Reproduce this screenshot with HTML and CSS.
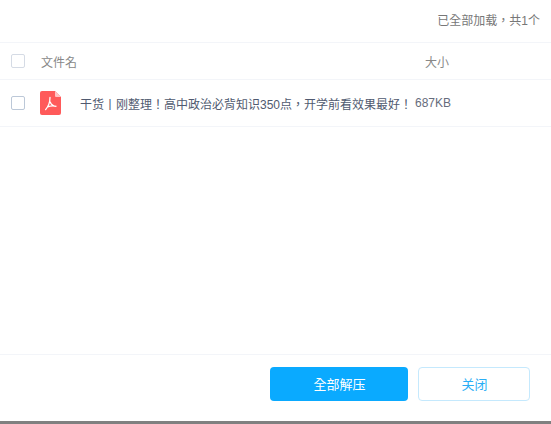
FILE: index.html
```html
<!DOCTYPE html>
<html lang="zh-Hant">
<head>
<meta charset="utf-8">
<title>解压</title>
<link rel="stylesheet" href="styles.css">
</head>
<body>
<div class="dialog">
  <div class="status">已全部加载，共1个</div>
  <div class="row head">
    <span class="check light"></span>
    <span class="name-head">文件名</span>
    <span class="size-head">大小</span>
  </div>
  <div class="row item">
    <span class="check"></span>
    <svg class="pdf" viewBox="0 0 21 24" width="21" height="24" aria-hidden="true">
      <path d="M2 0H15L21 6V22a2 2 0 0 1-2 2H2a2 2 0 0 1-2-2V2a2 2 0 0 1 2-2z" fill="#ff5a5a"/>
      <path d="M15 0L21 6H16a1 1 0 0 1-1-1z" fill="#ffc4c4"/>
      <path d="M10 6.5C10 10 8.8 15 5.6 18.6M10.2 11C11 13.2 13 15.2 16.4 15.4C13.6 14.6 10.5 14.8 7.6 15.8" fill="none" stroke="#fff" stroke-width="1.3" stroke-linecap="round"/>
    </svg>
    <span class="file-name">干货丨刚整理！高中政治必背知识350点，开学前看效果最好！</span>
    <span class="file-size">687KB</span>
  </div>
  <div class="spacer"></div>
  <div class="footer">
    <button class="btn primary">全部解压</button>
    <button class="btn ghost">关闭</button>
  </div>
</div>
<div class="bottom-bar"></div>
</body>
</html>
```
FILE: styles.css
```css
* { box-sizing: border-box; }
html, body { margin: 0; padding: 0; height: 100%; }
body {
  width: 551px;
  height: 424px;
  overflow: hidden;
  background: #fff;
  font-family: "Liberation Sans", "Noto Sans CJK TC", sans-serif;
  display: flex;
  flex-direction: column;
}
.dialog { flex: 1; display: flex; flex-direction: column; min-height: 0; }
.status {
  height: 43px;
  padding: 13px 11px 0 0;
  text-align: right;
  font-size: 12px;
  line-height: 16px;
  color: #777;
  border-bottom: 1px solid #f3f5f9;
}
.row { display: flex; align-items: center; border-bottom: 1px solid #f3f5f9; }
.head { height: 37px; font-size: 12px; color: #888; }
.item { height: 47px; font-size: 12px; color: #505a70; }
.check {
  width: 14px;
  height: 14px;
  margin-left: 11px;
  flex: none;
  border: 1px solid #bcc8d8;
  border-radius: 2px;
  background: #fff;
}
.check.light { border-color: #d5dbe5; }
.name-head { margin-left: 16px; width: 384px; }
.pdf { margin-left: 15px; flex: none; }
.file-name { margin-left: 19px; width: 335px; flex: none; white-space: nowrap; }
.file-size { color: #666c7c; }
.spacer { flex: 1; }
.footer {
  height: 67px;
  border-top: 1px solid #f3f5f9;
  display: flex;
  justify-content: flex-end;
  gap: 10px;
  padding: 12px 21px 0 0;
}
.btn {
  height: 34px;
  border-radius: 4px;
  font-family: inherit;
  font-size: 13px;
  padding: 0 0 1px 1px;
  cursor: pointer;
}
.primary { width: 138px; background: #0aaaff; border: 0; color: #fff; }
.ghost { width: 112px; background: #fff; border: 1px solid #c5e9fd; color: #2aaef5; }
.bottom-bar { height: 3px; flex: none; background: #808080; }
```
